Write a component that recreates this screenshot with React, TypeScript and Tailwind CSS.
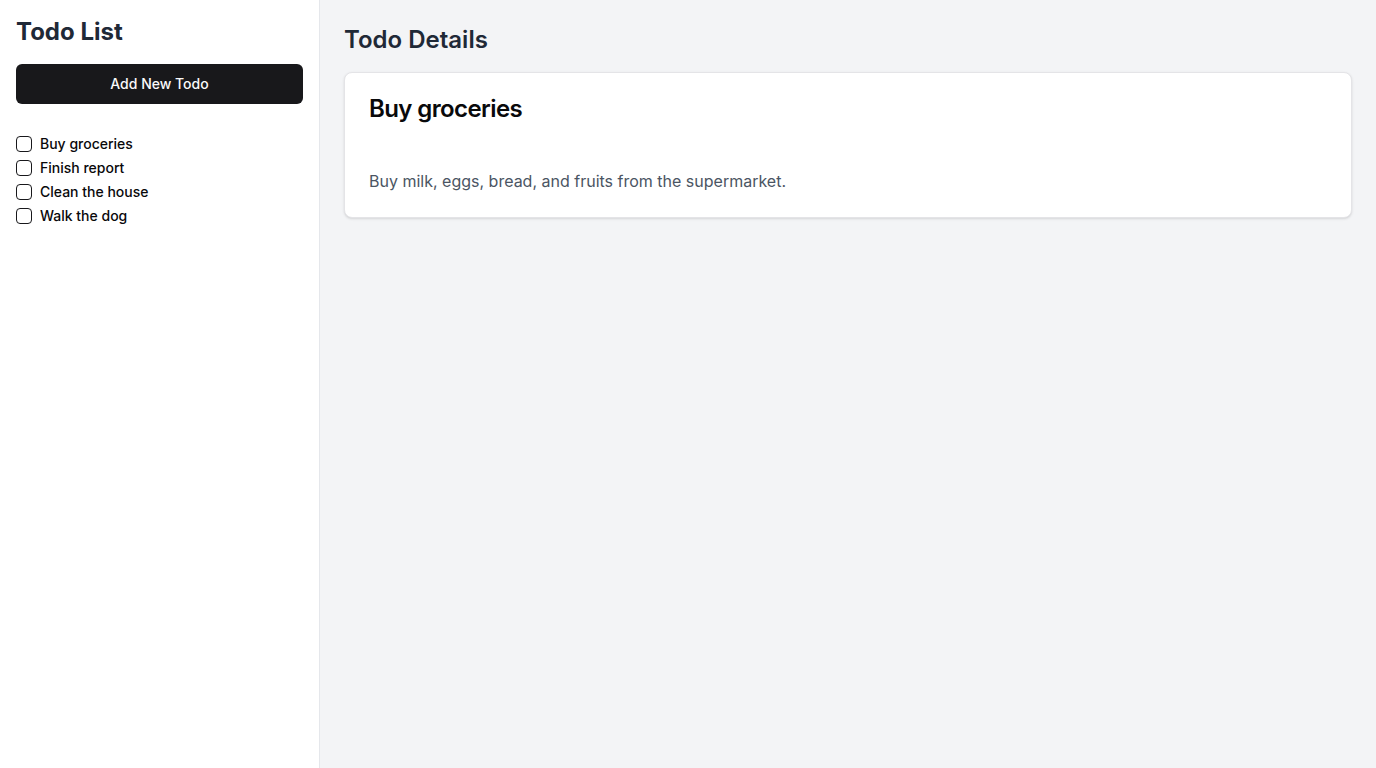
import React, { useState } from "react";

type Todo = { id: number; title: string; description: string; done: boolean };

const initialTodos: Todo[] = [
  { id: 1, title: "Buy groceries", description: "Buy milk, eggs, bread, and fruits from the supermarket.", done: false },
  { id: 2, title: "Finish report", description: "Complete the quarterly report for the team meeting.", done: false },
  { id: 3, title: "Clean the house", description: "Vacuum the floors and tidy up the living room.", done: false },
  { id: 4, title: "Walk the dog", description: "Take the dog for a walk around the park.", done: false },
];

export default function App() {
  const [todos, setTodos] = useState<Todo[]>(initialTodos);
  const [selectedId, setSelectedId] = useState(1);
  const selected = todos.find((t) => t.id === selectedId);

  const toggle = (id: number) =>
    setTodos((prev) => prev.map((t) => (t.id === id ? { ...t, done: !t.done } : t)));

  return (
    <div className="flex h-screen w-full bg-white font-['Inter',sans-serif] text-[#09090b]">
      <aside className="flex w-80 shrink-0 flex-col border-r border-[#e5e7eb] bg-white p-4">
        <h1 className="mb-4 text-2xl font-bold text-[#1f2937]">Todo List</h1>
        <button className="h-10 w-full rounded-md bg-[#18181b] text-sm font-medium text-[#fafafa]">
          Add New Todo
        </button>
        <ul className="mt-7">
          {todos.map((todo) => (
            <li
              key={todo.id}
              className="flex h-6 cursor-pointer items-center gap-2"
              onClick={() => setSelectedId(todo.id)}
            >
              <button
                onClick={(e) => {
                  e.stopPropagation();
                  toggle(todo.id);
                }}
                className="flex h-4 w-4 shrink-0 items-center justify-center rounded-[4px] border border-[#18181b] bg-white"
              >
                {todo.done && (
                  <svg viewBox="0 0 24 24" className="h-3 w-3" fill="none" stroke="currentColor" strokeWidth={3}>
                    <path d="M20 6 9 17l-5-5" />
                  </svg>
                )}
              </button>
              <span className={`text-sm font-medium ${todo.done ? "line-through text-gray-400" : ""}`}>
                {todo.title}
              </span>
            </li>
          ))}
        </ul>
      </aside>

      <main className="flex-1 bg-[#f3f4f6] p-6">
        <h2 className="mb-4 text-2xl font-semibold text-[#1f2937]">Todo Details</h2>
        {selected && (
          <div className="rounded-lg border border-[#e4e4e7] bg-white shadow-sm">
            <div className="p-6">
              <h3 className="text-2xl leading-none font-semibold tracking-tight">{selected.title}</h3>
            </div>
            <div className="p-6">
              <p className="text-base text-[#4b5563]">{selected.description}</p>
            </div>
          </div>
        )}
      </main>
    </div>
  );
}
